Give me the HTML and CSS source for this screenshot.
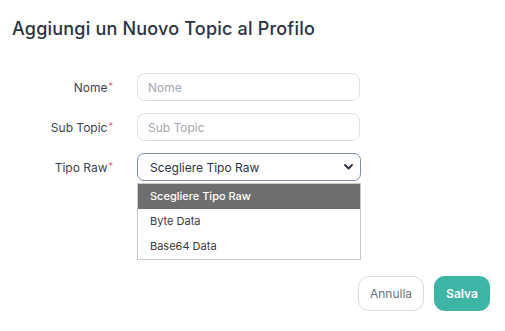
FILE: index.html
```html
<!DOCTYPE html>
<html lang="it">
<head>
  <meta charset="UTF-8">
  <meta name="viewport" content="width=device-width, initial-scale=1.0">
  <title>Nuovo Topic</title>
  <link rel="stylesheet" href="styles.css">
</head>
<body>
  <div class="modal">
    <h1 class="modal-title">Aggiungi un Nuovo Topic al Profilo</h1>

    <form class="topic-form">
      <div class="form-row">
        <label for="nome" class="form-label">Nome<span class="req">*</span></label>
        <input type="text" id="nome" class="form-input" placeholder="Nome">
      </div>
      <div class="form-row">
        <label for="subtopic" class="form-label">Sub Topic<span class="req">*</span></label>
        <input type="text" id="subtopic" class="form-input" placeholder="Sub Topic">
      </div>
      <div class="form-row">
        <label class="form-label">Tipo Raw<span class="req">*</span></label>
        <div class="select-wrap">
          <div class="form-select">
            <span>Scegliere Tipo Raw</span>
            <svg class="chevron" width="9" height="6" viewBox="0 0 9 6">
              <path d="M1 1 L4.5 4.5 L8 1" fill="none" stroke="#2a2f38" stroke-width="1.8" stroke-linecap="round" stroke-linejoin="round"/>
            </svg>
          </div>
          <ul class="select-list">
            <li class="option active">Scegliere Tipo Raw</li>
            <li class="option">Byte Data</li>
            <li class="option">Base64 Data</li>
          </ul>
        </div>
      </div>

      <div class="actions">
        <button type="button" class="btn btn-cancel">Annulla</button>
        <button type="button" class="btn btn-save">Salva</button>
      </div>
    </form>
  </div>
</body>
</html>
```

FILE: styles.css
```css
body {
  margin: 0;
  background-color: #ffffff;
  font-family: Inter, "Noto Sans", sans-serif;
  color: #2b3445;
}
.modal {
  padding: 17px 15px 0 12px;
}
.modal-title {
  margin: 0;
  font-size: 18px;
  font-weight: 500;
  line-height: 24px;
  letter-spacing: 0.2px;
  color: #2a3342;
}
.topic-form {
  margin-top: 32px;
}
.form-row {
  display: flex;
  align-items: flex-start;
  margin-bottom: 12px;
}
.form-label {
  width: 101px;
  padding-top: 7px;
  text-align: right;
  font-size: 12px;
  color: #3d4350;
}
.req {
  color: #e8467c;
  font-size: 9px;
  vertical-align: top;
  margin-left: 1px;
}
.form-input {
  margin-left: 24px;
  width: 223px;
  height: 28px;
  box-sizing: border-box;
  padding: 0 10px;
  border: 1px solid #dde1e7;
  border-radius: 8px;
  font-family: inherit;
  font-size: 12px;
  color: #2b3445;
  outline: none;
}
.form-input::placeholder {
  color: #a3a8b0;
}
.select-wrap {
  margin-left: 24px;
  width: 224px;
}
.form-select {
  display: flex;
  align-items: center;
  justify-content: space-between;
  height: 28px;
  box-sizing: border-box;
  padding: 0 7px 0 12px;
  border: 1px solid #7f8ca3;
  border-radius: 7px;
  font-size: 12px;
  color: #2b3445;
}
.select-list {
  list-style: none;
  margin: 2px 0 0;
  padding: 0;
  border: 1px solid #c9c9c9;
}
.option {
  height: 25px;
  line-height: 25px;
  padding-left: 12px;
  font-size: 11px;
  color: #3a3a3a;
}
.option.active {
  background-color: #6e6e6e;
  color: #ffffff;
  font-weight: 500;
}
.actions {
  display: flex;
  justify-content: flex-end;
  gap: 10px;
  margin-top: 16px;
}
.btn {
  height: 35px;
  padding: 0;
  border-radius: 11px;
  font-family: inherit;
  font-size: 12px;
}
.btn-cancel {
  width: 66px;
  background-color: #ffffff;
  border: 1px solid #d6dce4;
  color: #6b7280;
}
.btn-save {
  width: 56px;
  background-color: #3db5a5;
  border: none;
  color: #ffffff;
  font-weight: 600;
}
```
